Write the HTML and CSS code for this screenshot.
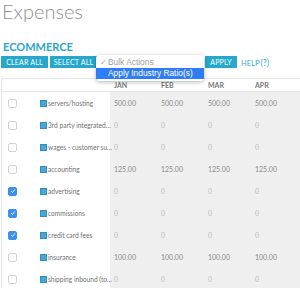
FILE: index.html
```html
<!DOCTYPE html>
<html lang="en">
<head>
    <meta charset="UTF-8">
    <title>Expenses</title>
    <link rel="stylesheet" href="styles.css">
</head>
<body>
    <div class="page">
        <h1 class="title">Expenses</h1>
        <div class="section-title">ECOMMERCE</div>

        <div class="toolbar">
            <button class="btn btn-wide">CLEAR ALL</button>
            <button class="btn btn-wide">SELECT ALL</button>
            <div class="select-box"></div>
            <button class="btn btn-apply">APPLY</button>
            <span class="help">HELP<span class="help-q">(?)</span></span>
        </div>

        <div class="menu">
            <div class="menu-item"><span class="menu-check">✓</span>Bulk Actions</div>
            <div class="menu-item active">Apply Industry Ratio(s)</div>
        </div>

        <div class="grid">
            <div class="row head">
                <div></div>
                <div></div>
                <div class="month">JAN</div>
                <div class="month">FEB</div>
                <div class="month">MAR</div>
                <div class="month">APR</div>
            </div>

            <div class="row">
                <div class="cell-check"><span class="check"></span></div>
                <div class="name"><span class="tag"></span><span class="label">servers/hosting</span></div>
                <div class="val">500.00</div><div class="val">500.00</div><div class="val">500.00</div><div class="val">500.00</div>
            </div>
            <div class="row">
                <div class="cell-check"><span class="check"></span></div>
                <div class="name"><span class="tag"></span><span class="label">3rd party integrated…</span></div>
                <div class="val zero">0</div><div class="val zero">0</div><div class="val zero">0</div><div class="val zero">0</div>
            </div>
            <div class="row">
                <div class="cell-check"><span class="check"></span></div>
                <div class="name"><span class="tag"></span><span class="label">wages - customer su…</span></div>
                <div class="val zero">0</div><div class="val zero">0</div><div class="val zero">0</div><div class="val zero">0</div>
            </div>
            <div class="row">
                <div class="cell-check"><span class="check"></span></div>
                <div class="name"><span class="tag"></span><span class="label">accounting</span></div>
                <div class="val">125.00</div><div class="val">125.00</div><div class="val">125.00</div><div class="val">125.00</div>
            </div>
            <div class="row">
                <div class="cell-check"><span class="check checked"><svg viewBox="0 0 8 8" width="6" height="6"><path d="M1.5 4.2 L3.3 6 L6.6 1.8" fill="none" stroke="#fff" stroke-width="1.2"/></svg></span></div>
                <div class="name"><span class="tag"></span><span class="label">advertising</span></div>
                <div class="val zero">0</div><div class="val zero">0</div><div class="val zero">0</div><div class="val zero">0</div>
            </div>
            <div class="row">
                <div class="cell-check"><span class="check checked"><svg viewBox="0 0 8 8" width="6" height="6"><path d="M1.5 4.2 L3.3 6 L6.6 1.8" fill="none" stroke="#fff" stroke-width="1.2"/></svg></span></div>
                <div class="name"><span class="tag"></span><span class="label">commissions</span></div>
                <div class="val zero">0</div><div class="val zero">0</div><div class="val zero">0</div><div class="val zero">0</div>
            </div>
            <div class="row">
                <div class="cell-check"><span class="check checked"><svg viewBox="0 0 8 8" width="6" height="6"><path d="M1.5 4.2 L3.3 6 L6.6 1.8" fill="none" stroke="#fff" stroke-width="1.2"/></svg></span></div>
                <div class="name"><span class="tag"></span><span class="label">credit card fees</span></div>
                <div class="val zero">0</div><div class="val zero">0</div><div class="val zero">0</div><div class="val zero">0</div>
            </div>
            <div class="row">
                <div class="cell-check"><span class="check"></span></div>
                <div class="name"><span class="tag"></span><span class="label">insurance</span></div>
                <div class="val">100.00</div><div class="val">100.00</div><div class="val">100.00</div><div class="val">100.00</div>
            </div>
            <div class="row">
                <div class="cell-check"><span class="check"></span></div>
                <div class="name"><span class="tag"></span><span class="label">shipping inbound (to…</span></div>
                <div class="val zero">0</div><div class="val zero">0</div><div class="val zero">0</div><div class="val zero">0</div>
            </div>
        </div>
    </div>
</body>
</html>
```

FILE: styles.css
```css
body {
    margin: 0;
    font-family: Lato, "Open Sans", sans-serif;
    background-color: #fff;
    color: #666;
}
.page {
    position: relative;
    padding-left: 1px;
}
.title {
    margin: 0 0 0 1px;
    font-size: 20px;
    font-weight: 300;
    line-height: 22px;
    color: #909090;
}
.section-title {
    margin-top: 18px;
    margin-left: 2px;
    font-size: 11px;
    font-weight: bold;
    line-height: 13px;
    color: #2ba6c9;
}
.toolbar {
    display: flex;
    align-items: center;
    height: 14px;
    margin-top: 2px;
}
.btn {
    height: 12px;
    padding: 0;
    border: none;
    background-color: #25a8cc;
    color: #fff;
    font-family: Lato, sans-serif;
    font-size: 7px;
    line-height: 12px;
    letter-spacing: 0.2px;
}
.btn-wide {
    width: 47px;
    margin-right: 2px;
}
.select-box {
    width: 104px;
    height: 13px;
    border: 1px solid #ccc;
    border-radius: 3px;
    box-sizing: border-box;
}
.btn-apply {
    width: 32px;
    margin-left: 2px;
}
.help {
    margin-left: 4px;
    font-size: 7.5px;
    color: #3aaed2;
}
.help-q {
    font-size: 9px;
    margin-left: 1px;
}
.menu {
    position: absolute;
    left: 96px;
    top: 55px;
    width: 108px;
    padding: 1px 0 2px;
    background-color: #fff;
    border-radius: 4px;
    box-shadow: 0 1px 4px rgba(0,0,0,0.3);
    font-family: "Liberation Sans", Arial, sans-serif;
    font-size: 8.4px;
    z-index: 2;
}
.menu-item {
    height: 12px;
    line-height: 12px;
    padding-left: 12px;
    color: #a0a0a0;
}
.menu-check {
    display: inline-block;
    width: 8px;
    margin-left: -8px;
}
.menu-item.active {
    height: 11px;
    line-height: 11px;
    background-color: #2f7df6;
    color: #fff;
}
.grid {
    margin-top: 9px;
    border-top: 1px solid #e6e6e6;
    border-left: 1px solid #e6e6e6;
}
.row {
    display: grid;
    grid-template-columns: 33px 75px 47px 47px 47px 1fr;
    align-items: center;
    height: 22px;
    background: linear-gradient(to right, #fff 108px, #efefef 108px);
}
.row.head {
    height: 12px;
    background: #fff;
    border-bottom: 1px solid #e6e6e6;
}
.row > div {
    height: 100%;
    display: flex;
    align-items: center;
}
.month {
    padding-left: 4px;
    font-size: 7px;
    font-weight: bold;
    color: #777;
}
.cell-check {
    padding-left: 6px;
}
.check {
    display: flex;
    align-items: center;
    justify-content: center;
    width: 7px;
    height: 7px;
    border: 1px solid #d2d2d2;
    border-radius: 2px;
    background-color: #fff;
}
.check.checked {
    background-color: #3b8ff0;
    border-color: #3b8ff0;
}
.name {
    padding-left: 5px;
    font-size: 6.6px;
    color: #707070;
    white-space: nowrap;
    min-width: 0;
}
.tag {
    flex: none;
    width: 5px;
    height: 5px;
    margin-right: 1px;
    background-color: #4aa8d8;
    border: 0.5px solid #2f8fc4;
}
.val {
    padding-left: 4px;
    font-size: 7px;
    color: #8a8a8a;
}
.val.zero {
    color: #bcbcbc;
}
```
